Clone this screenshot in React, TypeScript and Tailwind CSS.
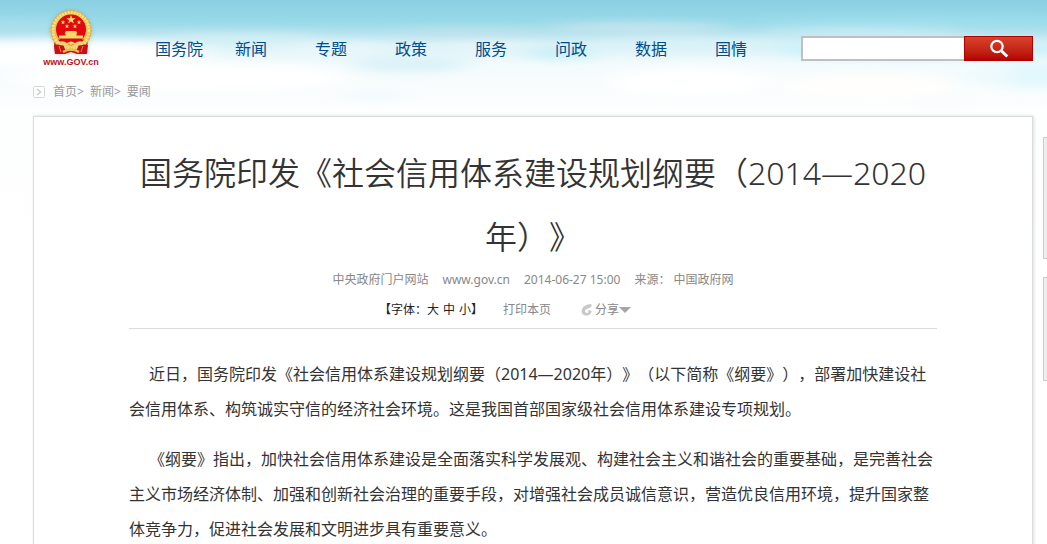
import { FC } from "react"

const navItems = ["国务院", "新闻", "专题", "政策", "服务", "问政", "数据", "国情"]

const paragraphs = [
  "近日，国务院印发《社会信用体系建设规划纲要（2014—2020年）》（以下简称《纲要》），部署加快建设社会信用体系、构筑诚实守信的经济社会环境。这是我国首部国家级社会信用体系建设专项规划。",
  "《纲要》指出，加快社会信用体系建设是全面落实科学发展观、构建社会主义和谐社会的重要基础，是完善社会主义市场经济体制、加强和创新社会治理的重要手段，对增强社会成员诚信意识，营造优良信用环境，提升国家整体竞争力，促进社会发展和文明进步具有重要意义。",
]

const Sky: FC = () => (
  <svg
    className="absolute inset-x-0 top-0 -z-10 h-[260px] w-full"
    viewBox="0 0 1047 260"
    preserveAspectRatio="none"
    aria-hidden="true"
  >
    <defs>
      <linearGradient id="sky" x1="0" y1="0" x2="0" y2="1">
        <stop offset="0" stopColor="#8bcfe3" />
        <stop offset="0.085" stopColor="#98dae9" />
        <stop offset="0.125" stopColor="#b4e2ed" />
        <stop offset="0.17" stopColor="#dbf2f8" />
        <stop offset="0.25" stopColor="#f4fbfd" />
        <stop offset="0.42" stopColor="#fdfefe" />
        <stop offset="1" stopColor="#ffffff" />
      </linearGradient>
      <filter id="haze" x="-20%" y="-100%" width="140%" height="300%">
        <feGaussianBlur stdDeviation="14 5" />
      </filter>
    </defs>
    <rect width="1047" height="260" fill="url(#sky)" />
    <g filter="url(#haze)">
      <ellipse cx="60" cy="54" rx="150" ry="13" fill="#ffffff" />
      <ellipse cx="10" cy="25" rx="70" ry="5" fill="#abdfeb" />
      <ellipse cx="240" cy="39" rx="80" ry="5" fill="#d2f0f5" />
      <ellipse cx="180" cy="77" rx="170" ry="14" fill="#ffffff" />
      <ellipse cx="330" cy="50" rx="60" ry="6" fill="#e9f7fa" />
      <ellipse cx="410" cy="64" rx="60" ry="8" fill="#d9f2f8" />
      <ellipse cx="375" cy="96" rx="35" ry="5" fill="#f1fafd" />
      <ellipse cx="470" cy="32" rx="70" ry="3" fill="#c3e1ec" />
      <ellipse cx="490" cy="48" rx="40" ry="6" fill="#e6f5f9" />
      <ellipse cx="560" cy="53" rx="36" ry="6" fill="#c5f0f7" />
      <ellipse cx="640" cy="27" rx="90" ry="3" fill="#dde9ef" />
      <ellipse cx="690" cy="45" rx="90" ry="6" fill="#d8f2f8" />
      <ellipse cx="690" cy="82" rx="80" ry="14" fill="#ffffff" />
      <ellipse cx="920" cy="22" rx="160" ry="4" fill="#a1e0ef" />
      <ellipse cx="860" cy="32" rx="100" ry="3" fill="#d2f0f6" />
      <ellipse cx="920" cy="49" rx="150" ry="9" fill="#c8f2fa" />
      <ellipse cx="1035" cy="75" rx="40" ry="14" fill="#e2f8fd" />
      <ellipse cx="985" cy="76" rx="30" ry="7" fill="#edfafd" />
      <ellipse cx="870" cy="86" rx="90" ry="12" fill="#fffefc" />
      <ellipse cx="940" cy="104" rx="24" ry="5" fill="#f8fbfd" />
    </g>
  </svg>
)

const Emblem: FC = () => (
  <svg width="44" height="46" viewBox="0 0 44 46" className="drop-shadow-sm" aria-hidden="true">
    <path d="M5 32 L39 32 L37 45 L28 45 L22 43 L16 45 L6 45 Z" fill="#c4151c" />
    <circle cx="22" cy="21.5" r="20.5" fill="#e8bf52" />
    <circle cx="22" cy="21.5" r="18" fill="none" stroke="#f8e083" strokeWidth="3" strokeDasharray="2 1" />
    <circle cx="22" cy="21.5" r="20" fill="none" stroke="#d1a13b" strokeWidth="1" strokeDasharray="2 2" />
    <circle cx="22" cy="20.5" r="15" fill="#e3070f" />
    <path
      d="M22 6 L23.2 9.2 L26.6 9.2 L23.9 11.3 L24.9 14.5 L22 12.6 L19.1 14.5 L20.1 11.3 L17.4 9.2 L20.8 9.2 Z"
      fill="#ffdf6a"
    />
    <g fill="#ffdf6a">
      <path id="star" d="M14 11 L14.6 12.5 L16.2 12.6 L15 13.6 L15.4 15.2 L14 14.3 L12.6 15.2 L13 13.6 L11.8 12.6 L13.4 12.5 Z" />
      <use href="#star" x="16" />
      <use href="#star" x="4" y="4" />
      <use href="#star" x="12" y="4" />
    </g>
    <path d="M17 22 H27 L28.5 24.5 H27.5 V26.5 H34 V29.5 H10 V26.5 H16.5 V24.5 H15.5 Z" fill="#f8d869" />
    <path d="M9 30.5 H35 L33 33 H11 Z" fill="#e3070f" />
    <path d="M5 36 L14 35 L17 43 L6 45 Z M39 36 L30 35 L27 43 L38 45 Z" fill="#c90e17" />
    <path d="M9 33 Q14 31 18 34 Q22 31 26 34 Q30 31 35 33 L34 36 Q29 36 26 38 Q22 40 18 38 Q15 36 10 36 Z" fill="#f1d270" />
    <path d="M10 37 L12 43 M34 37 L32 43" stroke="#e8803a" strokeWidth="1" />
    <path d="M19 35 Q22 38 25 35" stroke="#b8862d" strokeWidth="0.8" fill="none" />
    <path d="M14 43 Q22 38 30 43" stroke="#e9bd50" strokeWidth="2.4" fill="none" />
  </svg>
)

const Header: FC = () => (
  <header className="flex h-20 items-start pr-[14px] pl-[44px]">
    <a href="#" className="mt-[9px] flex w-[54px] flex-col items-center" aria-label="www.GOV.cn">
      <Emblem />
      <span className="font-['Liberation_Sans',sans-serif] text-[9px] leading-[14px] font-bold text-[#b8141c]">
        www.GOV.cn
      </span>
    </a>
    <nav className="mt-[37px] ml-[57px] flex">
      {navItems.map((item) => (
        <a key={item} href="#" className="w-20 text-base leading-6 text-[#004b8d]">
          {item}
        </a>
      ))}
    </nav>
    <form className="mt-9 ml-auto flex h-[25px] w-[232px]">
      <input
        type="text"
        aria-label="搜索"
        className="min-w-0 flex-1 border-2 border-r-0 border-[#bfbfbf] bg-white px-1 text-xs outline-none"
      />
      <button
        type="button"
        aria-label="搜索"
        className="flex w-[69px] items-center justify-center border border-[#b00000] bg-linear-to-b from-[#d9412b] to-[#b30000]"
      >
        <svg width="20" height="19" viewBox="0 0 20 19" fill="none" stroke="#ffffff" aria-hidden="true">
          <circle cx="8" cy="7.5" r="5.7" strokeWidth="2.2" />
          <path d="M12 11.5 L18.3 17.5" strokeWidth="3" />
        </svg>
      </button>
    </form>
  </header>
)

const Breadcrumb: FC = () => (
  <nav className="flex h-6 items-center pl-[33px] text-xs text-[#999999]" aria-label="breadcrumb">
    <svg width="12" height="12" viewBox="0 0 12 12" fill="none" className="mr-2" aria-hidden="true">
      <rect x="0.5" y="0.5" width="11" height="11" rx="1" fill="#ffffff" stroke="#d6d6d6" />
      <path d="M4 3 L7.5 6 L4 9" stroke="#c9c9c9" strokeWidth="1.4" />
    </svg>
    <a href="#">首页</a>
    <span className="mr-1.5">&gt;</span>
    <a href="#">新闻</a>
    <span className="mr-1.5">&gt;</span>
    <a href="#">要闻</a>
  </nav>
)

const Toolbar: FC = () => (
  <div className="mt-2 flex justify-center border-b border-[#dcdcdc] pr-14 pb-[7px] text-xs leading-[22px] text-[#888888]">
    <div className="flex text-[#222222]">
      <span>【字体：</span>
      <div className="flex gap-1">
        <button type="button">大</button>
        <button type="button">中</button>
        <button type="button">小</button>
      </div>
      <span>】</span>
    </div>
    <button type="button" className="ml-5">
      打印本页
    </button>
    <button type="button" className="ml-[30px] flex items-center">
      <svg width="12" height="12" viewBox="0 0 12 12" className="mr-[2px]" aria-hidden="true">
        <path
          d="M10.5 0.3 C6 -0.3 1 2.5 0.6 7 C0.4 10 2.6 11.8 5.6 11.6 C8.6 11.4 10.4 9.6 10.6 7 C9 5.8 7 6 6 7.2 L8 7.6 C7.6 9.4 4.4 9.6 4 7.6 C3.6 5.6 6 4.6 8 4 C9.8 3.4 11 2.2 10.5 0.3 Z"
          fill="#c8c8c8"
        />
      </svg>
      分享
      <svg width="12" height="6" viewBox="0 0 12 6" aria-hidden="true">
        <path d="M0 0 H12 L6 6 Z" fill="#a6a6a6" />
      </svg>
    </button>
  </div>
)

const Article: FC = () => (
  <article className="min-w-0 flex-1 border border-[#d9dcdd] bg-white px-[95px] pt-6 pb-4 shadow-[1px_0_3px_#dddddd]">
    <h1 className="text-center text-[32px] leading-[64px] font-[350] text-[#333333]">
      国务院印发《社会信用体系建设规划纲要（2014—2020年）》
    </h1>
    <div className="flex justify-center gap-[14px] text-xs leading-[22px] text-[#888888]">
      <span>中央政府门户网站</span>
      <span>www.gov.cn</span>
      <time>2014-06-27 15:00</time>
      <span>来源： 中国政府网</span>
    </div>
    <Toolbar />
    <div className="mt-7 flex flex-col gap-[15px] text-base leading-[35px] text-[#333333]">
      {paragraphs.map((text) => (
        <p key={text} className="indent-5">
          {text}
        </p>
      ))}
    </div>
  </article>
)

const Sidebar: FC = () => (
  <aside className="mt-[21px] flex w-1 flex-col gap-[18px]">
    <div className="h-[122px] border border-r-0 border-[#cccccc] bg-[#eeeeee]" />
    <div className="h-[104px] border border-r-0 border-[#cccccc] bg-[#eeeeee]" />
  </aside>
)

const App: FC = () => {
  return (
    <div
      lang="zh-CN"
      className="relative isolate overflow-hidden bg-white font-['Noto_Sans','Noto_Sans_CJK_SC',sans-serif] [text-spacing-trim:space-all]"
    >
      <Sky />
      <Header />
      <Breadcrumb />
      <main className="mt-3 flex gap-[10px] pl-[33px]">
        <Article />
        <Sidebar />
      </main>
    </div>
  )
}

export default App
